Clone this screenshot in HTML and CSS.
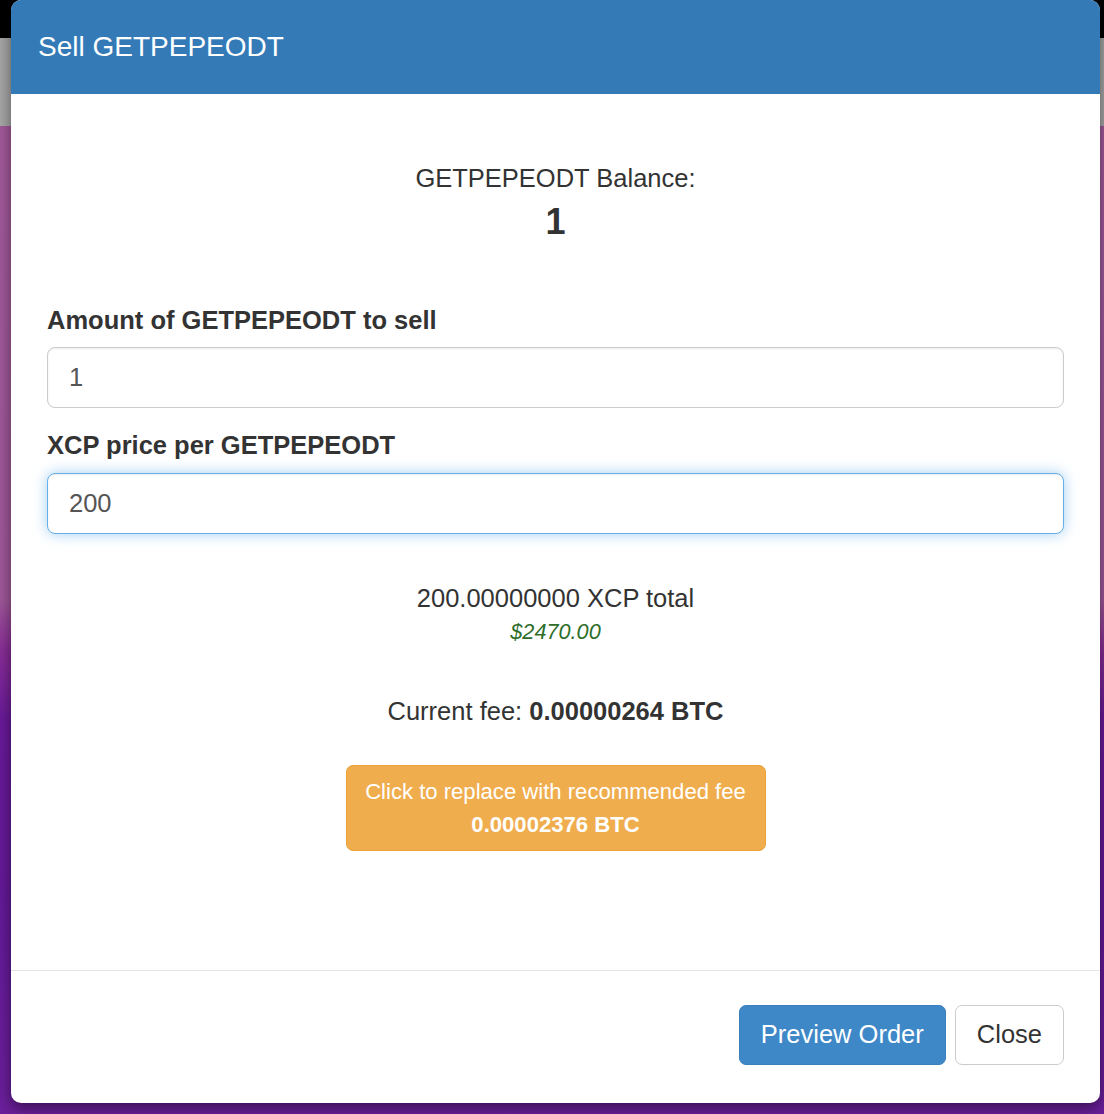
FILE: index.html
```html
<!DOCTYPE html>
<html lang="en">
<head>
    <meta charset="UTF-8">
    <meta name="viewport" content="width=device-width, initial-scale=1.0">
    <title>Sell GETPEPEODT</title>
    <link rel="stylesheet" href="styles.css">
</head>
<body>
    <div class="modal">
        <div class="modal-header">
            <h4 class="modal-title">Sell GETPEPEODT</h4>
        </div>
        <div class="modal-body">
            <div class="balance">
                <div class="balance-label">GETPEPEODT Balance:</div>
                <div class="balance-value">1</div>
            </div>

            <form id="sellForm">
                <div class="form-group">
                    <label for="amount">Amount of GETPEPEODT to sell</label>
                    <input type="text" id="amount" class="form-control" value="1">
                </div>
                <div class="form-group">
                    <label for="price">XCP price per GETPEPEODT</label>
                    <input type="text" id="price" class="form-control is-focused" value="200">
                </div>
            </form>

            <div class="total">
                <div class="total-xcp">200.00000000 XCP total</div>
                <div class="total-usd">$2470.00</div>
            </div>

            <div class="fee">Current fee: <strong>0.00000264 BTC</strong></div>

            <div class="fee-action">
                <button type="button" class="btn btn-warning">Click to replace with recommended fee<br><strong>0.00002376 BTC</strong></button>
            </div>
        </div>
        <div class="modal-footer">
            <button type="button" class="btn btn-primary">Preview Order</button>
            <button type="button" class="btn btn-default">Close</button>
        </div>
    </div>
</body>
</html>
```

FILE: styles.css
```css
html, body {
    height: 100%;
}

body {
    margin: 0;
    font-family: "Liberation Sans", Arial, sans-serif;
    font-size: 25.5px;
    line-height: 1.42857;
    color: #333;
    background: linear-gradient(to bottom,
        #000 0, #000 38px,
        #a8a8a8 38px, #a8a8a8 126px,
        #a45a9c 126px, #a0589a 600px,
        #8a2e98 650px, #6a1a9a 720px,
        #651a9a 900px, #6c1f9c 1114px);
}

.modal {
    margin-left: 11px;
    width: 1089px;
    background-color: #fff;
    border-radius: 10px;
    box-shadow: 0 5px 15px rgba(0, 0, 0, 0.5);
    overflow: hidden;
}

.modal-header {
    background-color: #337ab7;
    height: 94px;
    padding: 0 27px;
    display: flex;
    align-items: center;
}

.modal-title {
    margin: 0;
    color: #fff;
    font-size: 28px;
    font-weight: normal;
    line-height: 1.1;
}

.modal-body {
    padding: 66px 36px 119px;
}

.balance {
    text-align: center;
}

.balance-value {
    margin-top: 6px;
    font-size: 36px;
    font-weight: bold;
    line-height: 1.1;
}

#sellForm {
    margin-top: 60px;
}

.form-group + .form-group {
    margin-top: 19px;
}

label {
    display: block;
    font-weight: bold;
    margin-bottom: 9px;
}

.form-control {
    display: block;
    box-sizing: border-box;
    width: 100%;
    height: 61px;
    padding: 10px 21px;
    font-family: inherit;
    font-size: 25.5px;
    color: #555;
    background-color: #fff;
    border: 1.5px solid #ccc;
    border-radius: 8px;
    box-shadow: inset 0 1px 2px rgba(0, 0, 0, 0.075);
    outline: none;
}

.form-control.is-focused {
    border-color: #66afe9;
    box-shadow: inset 0 1px 2px rgba(0, 0, 0, 0.075), 0 0 14px rgba(102, 175, 233, 0.6);
}

.total {
    margin-top: 46px;
    text-align: center;
}

.total-usd {
    font-size: 21.7px;
    font-style: italic;
    color: #2e6e2a;
}

.fee {
    margin-top: 46px;
    text-align: center;
}

.fee-action {
    margin-top: 35px;
    text-align: center;
}

.btn {
    display: inline-block;
    box-sizing: border-box;
    font-family: inherit;
    cursor: pointer;
    border: 1.5px solid transparent;
    border-radius: 7px;
}

.btn-warning {
    width: 420px;
    height: 86px;
    padding: 9px 12px;
    font-size: 22.1px;
    line-height: 33px;
    color: #fff;
    background-color: #f0ad4e;
    border-color: #eea236;
}

.modal-footer {
    border-top: 1px solid #e5e5e5;
    padding: 34px 36px 38px;
    display: flex;
    justify-content: flex-end;
    gap: 9px;
}

.modal-footer .btn {
    height: 60px;
    padding: 0 21px;
    font-size: 25.5px;
}

.btn-primary {
    color: #fff;
    background-color: #3e88c8;
    border-color: #3a80bd;
}

.btn-default {
    color: #333;
    background-color: #fff;
    border-color: #ccc;
}
```
